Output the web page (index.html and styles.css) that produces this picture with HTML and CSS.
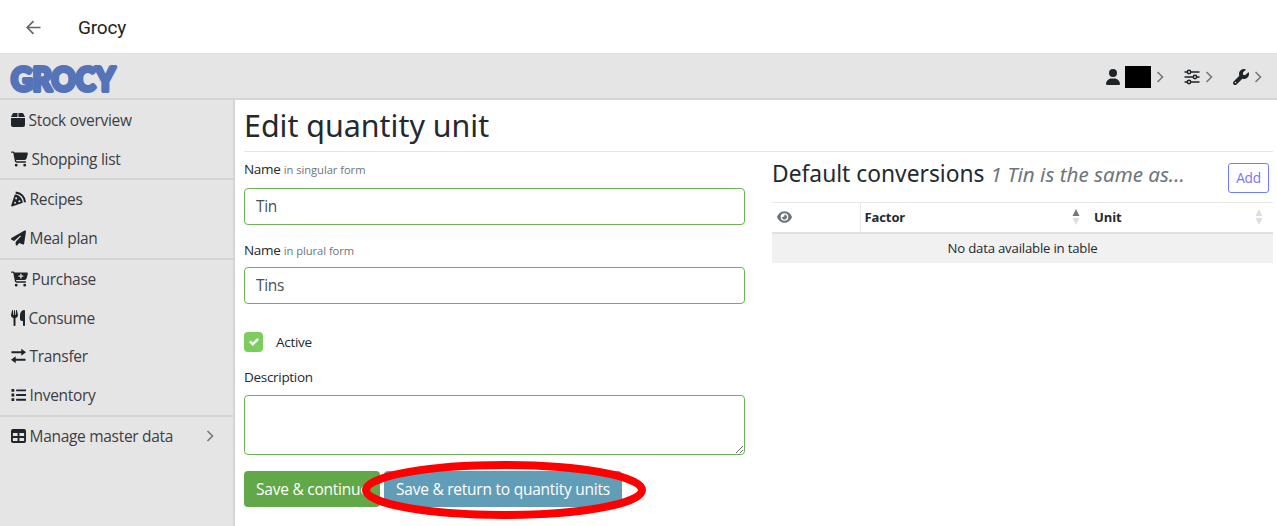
FILE: index.html
```
<!DOCTYPE html>
<html lang="en">
<head>
  <meta charset="UTF-8">
  <meta name="viewport" content="width=device-width, initial-scale=1">
  <title>Edit quantity unit | Grocy</title>
  <link rel="stylesheet" href="styles.css">
</head>
<body>
  <header class="app-bar">
    <svg class="back" viewBox="0 0 16 16"><path d="M15.5 8H1.5M8 1.2L1.2 8L8 14.8"/></svg>
    <span class="app-title">Grocy</span>
  </header>

  <nav class="navbar">
    <a class="brand" href="#">
      <svg width="110" height="44" viewBox="0 0 110 44"><text x="1" y="35.500" textLength="104" lengthAdjust="spacingAndGlyphs">GROCY</text></svg>
    </a>
    <div class="nav-tools">
      <a class="tool user" href="#">
        <svg class="icon" width="14" height="16" viewBox="0 0 448 512"><path d="M224 256A128 128 0 1 0 224 0a128 128 0 1 0 0 256zm-45.7 48C79.800 304 0 383.800 0 482.300C0 498.700 13.300 512 29.700 512H418.300c16.400 0 29.700-13.300 29.700-29.700C448 383.800 368.200 304 269.700 304H178.300z"/></svg>
        <span class="user-name"></span>
        <svg class="chevron" viewBox="0 0 8 12"><path d="M1.500 1L6.500 6L1.500 11"/></svg>
      </a>
      <a class="tool settings" href="#">
        <svg class="sliders" viewBox="0 0 16 16"><path d="M.5 3H3M7 3h8.500M.5 8H9M13 8h2.500M.5 13H3M7 13h8.500"/><circle cx="5" cy="3" r="1.700"/><circle cx="11" cy="8" r="1.700"/><circle cx="5" cy="13" r="1.700"/></svg>
        <svg class="chevron" viewBox="0 0 8 12"><path d="M1.500 1L6.500 6L1.500 11"/></svg>
      </a>
      <a class="tool" href="#">
        <svg class="icon" width="16" height="16" viewBox="0 0 512 512"><path d="M352 320c88.400 0 160-71.600 160-160c0-15.300-2.200-30.100-6.200-44.200c-3.100-10.800-16.400-13.200-24.300-5.300l-76.800 76.800c-3 3-7.100 4.700-11.300 4.700H336c-8.800 0-16-7.200-16-16V118.600c0-4.200 1.700-8.300 4.700-11.300l76.800-76.800c7.900-7.900 5.400-21.200-5.300-24.300C382.100 2.200 367.300 0 352 0C263.600 0 192 71.600 192 160c0 19.100 3.400 37.500 9.500 54.500L19.900 396.100C7.200 408.800 0 426.100 0 444.100C0 481.600 30.400 512 67.900 512c18 0 35.300-7.200 48-19.900L297.500 310.500c17 6.200 35.400 9.500 54.500 9.500zM80 408a24 24 0 1 1 0 48 24 24 0 1 1 0-48z"/></svg>
        <svg class="chevron" viewBox="0 0 8 12"><path d="M1.500 1L6.500 6L1.500 11"/></svg>
      </a>
    </div>
  </nav>

  <div class="layout">
    <aside class="sidebar">
      <ul class="menu">
        <li><a href="#"><svg class="icon" width="14" height="16" viewBox="0 0 448 512"><path d="M50.700 58.500L0 160H208V32H93.700C75.500 32 58.900 42.300 50.700 58.500zM240 160H448L397.300 58.500C389.100 42.300 372.500 32 354.300 32H240V160zM448 192H0V416c0 35.300 28.700 64 64 64H384c35.300 0 64-28.700 64-64V192z"/></svg>Stock overview</a></li>
        <li><a href="#"><svg class="icon" width="17" height="16" viewBox="0 0 576 512"><path d="M0 24C0 10.700 10.700 0 24 0H69.500c22 0 41.500 12.800 50.600 32h411c26.300 0 45.500 25 38.600 50.400l-41 152.300c-8.500 31.400-37 53.300-69.500 53.300H170.700l5.400 28.500c2.200 11.300 12.100 19.500 23.600 19.500H488c13.300 0 24 10.700 24 24s-10.700 24-24 24H199.700c-34.600 0-64.300-24.600-70.700-58.500L77.400 54.500c-.7-3.800-4-6.500-7.900-6.500H24C10.700 48 0 37.300 0 24zM128 464a48 48 0 1 1 96 0 48 48 0 1 1-96 0zm336-48a48 48 0 1 1 0 96 48 48 0 1 1 0-96z"/></svg>Shopping list</a></li>
        <li class="divided"><a href="#"><svg class="icon" width="15" height="16" viewBox="0 0 16 16"><path fill="none" stroke="#1f2429" stroke-width="2.200" d="M5 1.200C10.500 1.500 14.500 5.500 14.900 11.500"/><path fill-rule="evenodd" d="M4 3.300C8.800 3.800 12 7 12.600 12.100L1.100 15.900C.5 16.100 0 15.600.2 15ZM5.500 6.200A1.100 1.100 0 1 0 5.500 8.400A1.100 1.100 0 1 0 5.500 6.200ZM9 9.200A1.100 1.100 0 1 0 9 11.400A1.100 1.100 0 1 0 9 9.200ZM4.300 11A1 1 0 1 0 4.300 13A1 1 0 1 0 4.300 11Z"/></svg>Recipes</a></li>
        <li><a href="#"><svg class="icon" width="15" height="16" viewBox="0 0 512 512"><path d="M498.100 5.600c10.100 7 15.400 19.100 13.500 31.200l-64 416c-1.500 9.700-7.400 18.200-16 23s-18.900 5.400-28 1.600L284 427.700l-68.500 74.100c-8.900 9.700-22.900 12.900-35.200 8.100S160 493.200 160 480V396.400c0-4 1.500-7.800 4.200-10.700L331.800 202.800c5.800-6.300 5.600-16-.4-22s-15.700-6.400-22-.7L106 360.800 17.700 316.600C7.100 311.300.3 300.700 0 288.900s5.900-22.800 16.100-28.700l448-256c10.700-6.100 23.900-5.500 34 1.400z"/></svg>Meal plan</a></li>
        <li class="divided"><a href="#"><svg class="icon" width="17" height="16" viewBox="0 0 576 512"><path fill-rule="evenodd" d="M0 24C0 10.700 10.700 0 24 0H69.500c22 0 41.500 12.800 50.600 32h411c26.300 0 45.500 25 38.600 50.400l-41 152.300c-8.500 31.400-37 53.300-69.500 53.300H170.700l5.400 28.500c2.200 11.300 12.100 19.500 23.600 19.500H488c13.300 0 24 10.700 24 24s-10.700 24-24 24H199.700c-34.600 0-64.300-24.600-70.700-58.500L77.400 54.500c-.7-3.800-4-6.500-7.900-6.500H24C10.700 48 0 37.300 0 24zM128 464a48 48 0 1 1 96 0 48 48 0 1 1-96 0zm336-48a48 48 0 1 1 0 96 48 48 0 1 1 0-96zM314 76v60h-60v42h60v60h42v-60h60v-42h-60V76z"/></svg>Purchase</a></li>
        <li><a href="#"><svg class="icon" width="14" height="16" viewBox="0 0 448 512"><path d="M416 0C400 0 288 32 288 176V288c0 35.300 28.700 64 64 64h32V480c0 17.700 14.300 32 32 32s32-14.300 32-32V32c0-17.700-14.300-32-32-32zM64 16C64 7.800 57.900 1 49.700 .1S34.200 4.600 32.400 12.500L2.100 148.800C.7 155.100 0 161.500 0 167.900c0 45.900 35.100 83.600 80 87.700V480c0 17.700 14.300 32 32 32s32-14.300 32-32V255.600c44.900-4.100 80-41.800 80-87.700c0-6.400-.7-12.800-2.100-19.100L191.600 12.500c-1.800-8-9.300-13.300-17.400-12.400S160 7.800 160 16V150.200c0 5.400-4.400 9.800-9.800 9.800c-5.100 0-9.300-3.900-9.800-9L127.900 14.600C127.200 6.300 120.300 0 112 0s-15.200 6.300-15.900 14.600L83.700 151c-.5 5.100-4.700 9-9.800 9c-5.400 0-9.800-4.400-9.800-9.800V16z"/></svg>Consume</a></li>
        <li><a href="#"><svg class="icon" width="15" height="16" viewBox="0 0 16 16"><path fill="none" stroke="#1f2429" stroke-width="2" d="M.5 4H14M2 12H15.500"/><path d="M11 0.200L16 4L11 7.800ZM5 8.200L0 12L5 15.800Z"/></svg>Transfer</a></li>
        <li><a href="#"><svg class="icon" width="15" height="16" viewBox="0 0 16 16"><path d="M.5 1.500h3v3h-3zM.5 6.500h3v3h-3zM.5 11.500h3v3h-3zM5.500 2H16v2H5.500zM5.500 7H16v2H5.500zM5.500 12H16v2H5.500z"/></svg>Inventory</a></li>
        <li class="divided"><a href="#"><svg class="icon" width="15" height="16" viewBox="0 0 16 16" preserveAspectRatio="none"><path fill-rule="evenodd" d="M2 1H14A2 2 0 0 1 16 3V13A2 2 0 0 1 14 15H2A2 2 0 0 1 0 13V3A2 2 0 0 1 2 1ZM2 5V8H7V5ZM9 5V8H14V5ZM2 10V13H7V10ZM9 10V13H14V10Z"/></svg>Manage master data<svg class="chevron" viewBox="0 0 8 12"><path d="M1.500 1L6.500 6L1.500 11"/></svg></a></li>
      </ul>
    </aside>

    <main class="content">
      <h1>Edit quantity unit</h1>
      <div class="columns">
        <form class="unit-form">
          <label class="label">Name <small>in singular form</small></label>
          <input class="control" type="text" value="Tin">
          <label class="label plural">Name <small>in plural form</small></label>
          <input class="control" type="text" value="Tins">
          <label class="check">
            <span class="box"><svg viewBox="0 0 8 8"><path d="M6.564.75l-3.590 3.612-1.538-1.550L0 4.260l2.974 2.990L8 2.193z"/></svg></span>
            Active
          </label>
          <label class="label">Description</label>
          <textarea class="control description"></textarea>
          <div class="actions">
            <button type="button" class="btn success">Save &amp; continue</button>
            <button type="button" class="btn info">Save &amp; return to quantity units</button>
            <svg class="marker" viewBox="0 0 284 58"><ellipse cx="142" cy="29" rx="138" ry="25"/></svg>
          </div>
        </form>

        <section class="conversions">
          <div class="conversions-head">
            <h2>Default conversions <em>1 Tin is the same as...</em></h2>
            <a class="btn-add" href="#">Add</a>
          </div>
          <table>
            <thead>
              <tr>
                <th class="eye"><svg width="15" height="14" viewBox="0 0 576 512"><path d="M288 32c-80.800 0-145.500 36.800-192.600 80.600C48.600 156 17.300 208 2.500 243.700c-3.300 7.900-3.300 16.700 0 24.600C17.300 304 48.600 356 95.400 399.400C142.500 443.200 207.200 480 288 480s145.500-36.800 192.600-80.600c46.800-43.500 78.100-95.400 93-131.100c3.300-7.900 3.300-16.700 0-24.600c-14.900-35.700-46.200-87.700-93-131.100C433.500 68.800 368.800 32 288 32zM144 256a144 144 0 1 1 288 0 144 144 0 1 1-288 0zm144-64c0 35.300-28.700 64-64 64c-7.100 0-13.900-1.200-20.300-3.300c-5.500-1.800-11.900 1.600-11.700 7.400c.3 6.900 1.300 13.800 3.200 20.700c13.700 51.200 66.400 81.600 117.600 67.900s81.600-66.400 67.900-117.600c-11.100-41.500-47.800-69.400-88.600-71.100c-5.800-.2-9.200 6.100-7.400 11.700c2.100 6.400 3.300 13.200 3.300 20.300z"/></svg></th>
                <th class="factor"><div class="sort">Factor<svg viewBox="0 0 8 16"><path class="on" d="M4 0L7.500 7H.5Z"/><path d="M4 16L.5 9H7.500Z"/></svg></div></th>
                <th><div class="sort">Unit<svg viewBox="0 0 8 16"><path d="M4 0L7.500 7H.5Z"/><path d="M4 16L.5 9H7.500Z"/></svg></div></th>
              </tr>
            </thead>
            <tbody>
              <tr><td colspan="3">No data available in table</td></tr>
            </tbody>
          </table>
        </section>
      </div>
    </main>
  </div>
</body>
</html>
```
FILE: styles.css
```
*, *::before, *::after {
  box-sizing: border-box;
}

body {
  margin: 0;
  height: 526px;
  overflow: hidden;
  display: flex;
  flex-direction: column;
  font-family: "Open Sans", "Noto Sans", sans-serif;
  font-size: 13.5px;
  letter-spacing: -0.3px;
  color: #24292e;
  background: #fff;
}

a {
  color: inherit;
  text-decoration: none;
}

svg {
  display: block;
  flex: none;
}

.icon {
  fill: #1f2429;
}

.chevron {
  width: 8px;
  height: 12px;
  fill: none;
  stroke: #777;
  stroke-width: 1.6;
}

/* App bar */
.app-bar {
  height: 54px;
  flex: none;
  display: flex;
  align-items: center;
  padding: 1px 0 0 26px;
  border-bottom: 1px solid #e0e0e0;
}

.back {
  width: 15px;
  height: 15px;
  fill: none;
  stroke: #666;
  stroke-width: 1.8;
}

.app-title {
  margin-left: 37px;
  font-family: Roboto, sans-serif;
  font-size: 19px;
  letter-spacing: -0.2px;
  color: #222;
}

/* Navbar */
.navbar {
  height: 46px;
  flex: none;
  display: flex;
  align-items: center;
  justify-content: space-between;
  padding: 2px 15px 0 10px;
  background: #e5e5e5;
  border-bottom: 2px solid #d5d5d5;
}

.brand svg {
  overflow: visible;
}

.brand text {
  font-family: Lato, sans-serif;
  font-weight: 900;
  font-size: 33px;
  letter-spacing: 0;
  fill: #5473b8;
  stroke: #5473b8;
  stroke-width: 4;
  stroke-linejoin: round;
}

.nav-tools {
  display: flex;
  gap: 20px;
}

.tool {
  display: flex;
  align-items: center;
  gap: 5px;
}

.user-name {
  width: 26px;
  height: 22px;
  background: #000;
}

.sliders {
  width: 16px;
  height: 16px;
  fill: none;
  stroke: #1f2429;
  stroke-width: 1.5;
}

/* Sidebar */
.layout {
  flex: 1;
  display: flex;
  min-height: 0;
}

.sidebar {
  width: 235px;
  flex: none;
  background: #e5e5e5;
  border-right: 2px solid #d5d5d5;
}

.menu {
  list-style: none;
  margin: 0;
  padding: 0.5px 0 0;
}

.menu a {
  height: 38.75px;
  display: flex;
  align-items: center;
  padding: 0 19px 0 10.5px;
  font-size: 15.5px;
  color: #3c4044;
}

.menu .icon {
  margin-right: 4px;
}

.menu .chevron {
  margin-left: auto;
}

.divided {
  border-top: 2px solid #d5d5d5;
}

/* Content */
.content {
  flex: 1;
  padding: 0 4px 0 9px;
}

h1 {
  height: 52px;
  margin: 0;
  padding-top: 5px;
  font-family: "Noto Sans", sans-serif;
  font-size: 30.4px;
  font-weight: 400;
  line-height: 42px;
  letter-spacing: 0;
  border-bottom: 1px solid #e5e5e5;
}

.columns {
  display: grid;
  grid-template-columns: 501px 501px;
  gap: 27px;
}

.unit-form {
  padding-top: 7px;
}

.label {
  display: block;
  line-height: 20px;
  margin-bottom: 8px;
}

.label small {
  font-size: 11.2px;
  letter-spacing: -0.05px;
  color: #6c757d;
}

.control {
  display: block;
  width: 501px;
  height: 37px;
  padding: 0 11px 1px;
  font: 15.5px "Open Sans", sans-serif;
  letter-spacing: -0.3px;
  color: #495057;
  border: 1px solid #6cb255;
  border-radius: 4px;
  outline: none;
}

.plural {
  margin-top: 15px;
  margin-bottom: 6px;
}

.check {
  display: flex;
  align-items: center;
  gap: 13px;
  height: 20px;
  margin: 28px 0 15px;
}

.box {
  width: 19px;
  height: 20px;
  display: grid;
  place-items: center;
  background: #7bcd5e;
  border-radius: 4px;
}

.box svg {
  width: 10px;
  height: 10px;
  fill: #fff;
}

.description {
  height: 60px;
  resize: vertical;
}

.actions {
  position: relative;
  display: flex;
  gap: 4px;
  margin-top: 16px;
}

.btn {
  height: 36px;
  padding: 0 0 1px 12px;
  border: 0;
  border-radius: 4px;
  font: 15.5px "Open Sans", sans-serif;
  letter-spacing: -0.24px;
  text-align: left;
  color: #fff;
  white-space: nowrap;
}

.success {
  width: 136px;
  background: #62a748;
}

.info {
  width: 238px;
  background: #629db8;
}

/* Red ellipse drawn over the buttons */
.marker {
  position: absolute;
  left: 118px;
  top: -10px;
  width: 284px;
  height: 58px;
  fill: none;
  stroke: #f00;
  stroke-width: 8;
}

/* Conversions */
.conversions-head {
  height: 50px;
  display: flex;
  justify-content: space-between;
  padding: 11px 4px 0 0;
}

h2 {
  margin: -1px 0 0;
  font-family: "Noto Sans", sans-serif;
  font-size: 22.8px;
  font-weight: 400;
  line-height: 24px;
  letter-spacing: 0;
  white-space: nowrap;
}

h2 em {
  font-size: 20.6px;
  color: #6c757d;
}

.btn-add {
  width: 41px;
  height: 30px;
  border: 1px solid #6f7cff;
  border-radius: 3px;
  font-size: 13.7px;
  line-height: 28px;
  text-align: center;
  color: #7d72f5;
}

table {
  width: 501px;
  table-layout: fixed;
  border-collapse: collapse;
}

th {
  height: 30px;
  padding: 0 5px 1px 4px;
  font-size: 13px;
  letter-spacing: -0.1px;
  text-align: left;
  border-top: 1px solid #e5e7e9;
  border-bottom: 2px solid #dee2e6;
}

.eye {
  width: 88px;
  padding-left: 5px;
  border-right: 1px solid #e5e7e9;
}

.eye svg {
  fill: #6c757d;
}

.factor {
  width: 230px;
}

.sort {
  display: flex;
  align-items: center;
  justify-content: space-between;
  padding-right: 5px;
}

.sort svg {
  width: 8px;
  height: 16px;
  fill: #dedede;
}

.sort .on {
  fill: #777;
}

td {
  height: 30px;
  padding: 0;
  font-size: 13.2px;
  letter-spacing: -0.2px;
  text-align: center;
  background: #f1f1f1;
}
```
